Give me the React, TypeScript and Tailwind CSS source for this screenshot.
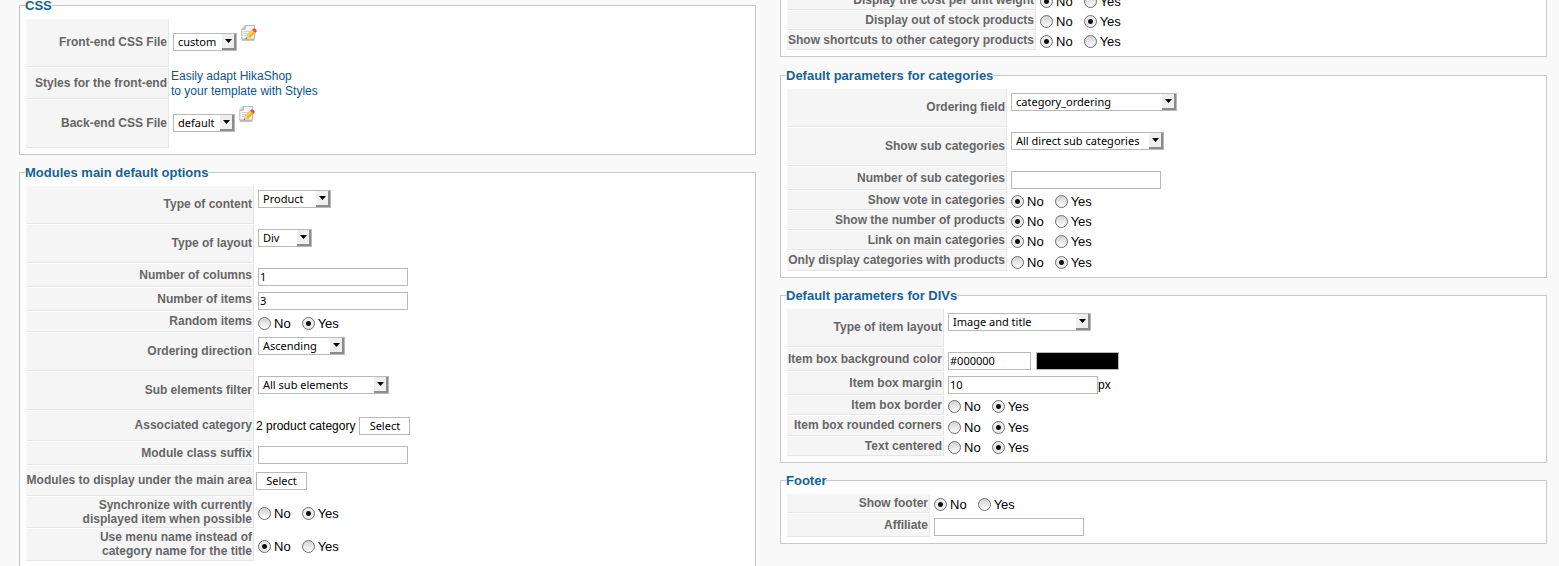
import React, { useId, useState } from "react";
import clsx from "clsx";

const controlFont = "font-['Noto_Sans','Open_Sans',sans-serif] text-[11px] text-black";

function Section({ title, className, children }: { title?: string; className?: string; children: React.ReactNode }) {
  return (
    <fieldset className={clsx("min-w-0 border border-[#c8c8c8] bg-white px-1.5 pb-1.5", title && "pt-[5px]", className)}>
      {title && <legend className="-ml-px text-[13px] font-bold leading-[17px] text-[#146295]">{title}</legend>}
      <div className="flex flex-col gap-px">{children}</div>
    </fieldset>
  );
}

type RowProps = {
  label: React.ReactNode;
  labelWidth: string;
  height: string;
  htmlFor?: string;
  labelId?: string;
  align?: string;
  children: React.ReactNode;
};

function Row({ label, labelWidth, height, htmlFor, labelId, align = "items-start pt-1 pl-1", children }: RowProps) {
  const cell = clsx(
    "flex shrink-0 items-center justify-end border-b border-r border-[#e6e6e6] bg-[#f5f5f5] pb-px pr-px text-right text-[12px] font-bold leading-[14px] text-[#666]",
    labelWidth,
  );
  return (
    <div className={clsx("flex", height)}>
      {htmlFor ? (
        <label htmlFor={htmlFor} className={cell}>{label}</label>
      ) : (
        <span id={labelId} className={cell}>{label}</span>
      )}
      <div className={clsx("flex min-w-0 flex-1", align)}>{children}</div>
    </div>
  );
}

function Select({ id, value, width, className }: { id: string; value: string; width: string; className?: string }) {
  return (
    <span className={clsx("relative block h-[18px] shrink-0", width, className)}>
      <select
        id={id}
        defaultValue={value}
        className={clsx("block h-[18px] w-full appearance-none border border-[#b9b9b9] bg-white pl-1 pr-4 leading-4 outline-none", controlFont)}
      >
        <option>{value}</option>
      </select>
      <span className="pointer-events-none absolute right-px top-px flex h-4 w-3.5 items-center justify-center border-b-2 border-r-2 border-[#8c8c8c] bg-[#efefef]">
        <svg width="7" height="4" viewBox="0 0 7 4" aria-hidden="true">
          <path d="M0 0h7L3.5 4z" fill="#000" />
        </svg>
      </span>
    </span>
  );
}

function TextInput({ id, value = "", width = "w-[150px]" }: { id: string; value?: string; width?: string }) {
  return (
    <input
      id={id}
      type="text"
      defaultValue={value}
      className={clsx("block h-[18px] shrink-0 border border-[#b9b9b9] bg-white px-px pb-px leading-[15px] outline-none", controlFont, width)}
    />
  );
}

type FieldProps = { label: React.ReactNode; labelWidth: string; height?: string };

function SelectRow({ value, width, ...field }: FieldProps & { value: string; width: string }) {
  const id = useId();
  return (
    <Row {...field} height="h-[38px]" htmlFor={id}>
      <Select id={id} value={value} width={width} />
    </Row>
  );
}

function TextRow({ value, suffix, ...field }: FieldProps & { value?: string; suffix?: string }) {
  const id = useId();
  return (
    <Row {...field} height="h-[23px]" htmlFor={id}>
      <TextInput id={id} value={value} />
      {suffix && <span className="text-[12px] leading-[18px] text-black">{suffix}</span>}
    </Row>
  );
}

function RadioRow({ value, height = "h-[19px]", ...field }: FieldProps & { value: "No" | "Yes" }) {
  const id = useId();
  const [picked, setPicked] = useState<string>(value);
  return (
    <Row {...field} height={height} labelId={id} align="items-center pt-0.5 pl-1">
      <div role="radiogroup" aria-labelledby={id} className="flex gap-[11px]">
        {["No", "Yes"].map((option) => (
          <label key={option} className="flex items-center gap-[3px] text-[13px] leading-[13px] text-black">
            <input
              type="radio"
              name={id}
              checked={picked === option}
              onChange={() => setPicked(option)}
              className="size-[13px] shrink-0 appearance-none rounded-full border border-[#6e6e6e] bg-linear-to-b from-[#d2d2d2] to-white checked:bg-[radial-gradient(circle,#111_0,#111_2px,#ececec_3px,#ececec_100%)]"
            />
            {option}
          </label>
        ))}
      </div>
    </Row>
  );
}

function EditIcon() {
  return (
    <svg width="16" height="16" viewBox="0 0 16 16" aria-hidden="true">
      <path d="M4 .5h9.500v13.500H.8V4z" fill="#f6f6f6" stroke="#b4b4b4" strokeWidth=".9" />
      <path d="M.8 15h12.700" stroke="#8d8d8d" strokeWidth="1" />
      <path d="M4.200.6v3.600H.8" fill="#ddd" stroke="#999" strokeWidth=".8" />
      <path d="M2.700 6.500h6M2.700 8.500h4M2.700 10.500h3" stroke="#c4c4c4" strokeWidth=".8" />
      <path d="M4.600 13.900l1-4 3.300 3.100z" fill="#ecd3a0" />
      <path d="M5.600 10l5.400-5.200 3.400 3.100L9 13z" fill="#f9b51c" />
      <path d="M6.800 11l5.300-5.100" stroke="#ffe168" strokeWidth="1.200" />
      <path d="M11 4.800l1.300-1.200q1.100-.6 2.400.5t.8 2.600l-1.100 1.200z" fill="#e8502f" />
      <path d="M4.600 13.900l.5-1.600 1.200 1.100z" fill="#555" />
    </svg>
  );
}

function CssFileRow({ label, value, width }: { label: string; value: string; width: string }) {
  const id = useId();
  return (
    <Row label={label} labelWidth="w-[143px]" height="h-12" htmlFor={id} align="items-start gap-1 pt-1.5 pl-1">
      <Select id={id} value={value} width={width} className="mt-2" />
      <a href="#edit" aria-label={"Edit " + label}>
        <EditIcon />
      </a>
    </Row>
  );
}

function PickButton() {
  return (
    <button type="button" className={clsx("h-[18px] w-[51px] border border-[#b9b9b9] bg-white leading-4", controlFont)}>
      Select
    </button>
  );
}

function ColorRow() {
  const id = useId();
  return (
    <Row label="Item box background color" labelWidth="w-[157px]" height="h-[23px]" htmlFor={id} align="items-start gap-[5px] pt-1 pl-1">
      <TextInput id={id} value="#000000" width="w-[83px]" />
      <span className="h-[18px] w-[83px] border border-[#b9b9b9] bg-black" />
    </Row>
  );
}

const modules = "w-[228px]";
const products = "w-[249px]";
const categories = "w-[220px]";
const divs = "w-[157px]";
const footer = "w-[143px]";

export default function App() {
  return (
    <main className="flow-root min-h-screen bg-[#f9f9f9] font-['Liberation_Sans',Arial,sans-serif]">
      <form className="grid grid-cols-[737fr_767fr] items-start gap-6 pl-[19px] pr-3">
        <div className="-mt-[3px] flex flex-col gap-[9px]">
          <Section title="CSS">
            <CssFileRow label="Front-end CSS File" value="custom" width="w-16" />
            <Row label="Styles for the front-end" labelWidth="w-[143px]" height="h-[31px]" align="items-center pl-0.5">
              <a href="#styles" className="text-[12px] leading-[15px] text-[#0b5590]">
                Easily adapt HikaShop
                <br />
                to your template with Styles
              </a>
            </Row>
            <CssFileRow label="Back-end CSS File" value="default" width="w-[62px]" />
          </Section>

          <Section title="Modules main default options">
            <SelectRow label="Type of content" labelWidth={modules} value="Product" width="w-[73px]" />
            <SelectRow label="Type of layout" labelWidth={modules} value="Div" width="w-[54px]" />
            <TextRow label="Number of columns" labelWidth={modules} value="1" />
            <TextRow label="Number of items" labelWidth={modules} value="3" />
            <RadioRow label="Random items" labelWidth={modules} value="Yes" height="h-5" />
            <SelectRow label="Ordering direction" labelWidth={modules} value="Ascending" width="w-[87px]" />
            <SelectRow label="Sub elements filter" labelWidth={modules} value="All sub elements" width="w-[131px]" />
            <Row label="Associated category" labelWidth={modules} height="h-[30px]" align="items-center gap-1 pl-0.5">
              <span className="text-[12px] text-black">2 product category</span>
              <PickButton />
            </Row>
            <TextRow label="Module class suffix" labelWidth={modules} />
            <Row label="Modules to display under the main area" labelWidth={modules} height="h-[30px]" align="items-center pl-0.5">
              <PickButton />
            </Row>
            <RadioRow
              label={<>Synchronize with currently<br />displayed item when possible</>}
              labelWidth={modules}
              value="Yes"
              height="h-[31px]"
            />
            <RadioRow
              label={<>Use menu name instead of<br />category name for the title</>}
              labelWidth={modules}
              value="No"
              height="h-8"
            />
          </Section>
        </div>

        <div className="-mt-2.5 flex flex-col gap-[9px]">
          <Section className="mb-px">
            <RadioRow label="Display the cost per unit weight" labelWidth={products} value="No" />
            <RadioRow label="Display out of stock products" labelWidth={products} value="Yes" />
            <RadioRow label="Show shortcuts to other category products" labelWidth={products} value="No" />
          </Section>

          <Section title="Default parameters for categories">
            <SelectRow label="Ordering field" labelWidth={categories} value="category_ordering" width="w-[166px]" />
            <SelectRow label="Show sub categories" labelWidth={categories} value="All direct sub categories" width="w-[153px]" />
            <TextRow label="Number of sub categories" labelWidth={categories} />
            <RadioRow label="Show vote in categories" labelWidth={categories} value="No" />
            <RadioRow label="Show the number of products" labelWidth={categories} value="No" />
            <RadioRow label="Link on main categories" labelWidth={categories} value="No" />
            <RadioRow label="Only display categories with products" labelWidth={categories} value="Yes" height="h-5" />
          </Section>

          <Section title="Default parameters for DIVs">
            <SelectRow label="Type of item layout" labelWidth={divs} value="Image and title" width="w-[143px]" />
            <ColorRow />
            <TextRow label="Item box margin" labelWidth={divs} value="10" suffix="px" />
            <RadioRow label="Item box border" labelWidth={divs} value="Yes" />
            <RadioRow label="Item box rounded corners" labelWidth={divs} value="Yes" height="h-5" />
            <RadioRow label="Text centered" labelWidth={divs} value="Yes" />
          </Section>

          <Section title="Footer">
            <RadioRow label="Show footer" labelWidth={footer} value="No" />
            <TextRow label="Affiliate" labelWidth={footer} />
          </Section>
        </div>
      </form>
    </main>
  );
}
